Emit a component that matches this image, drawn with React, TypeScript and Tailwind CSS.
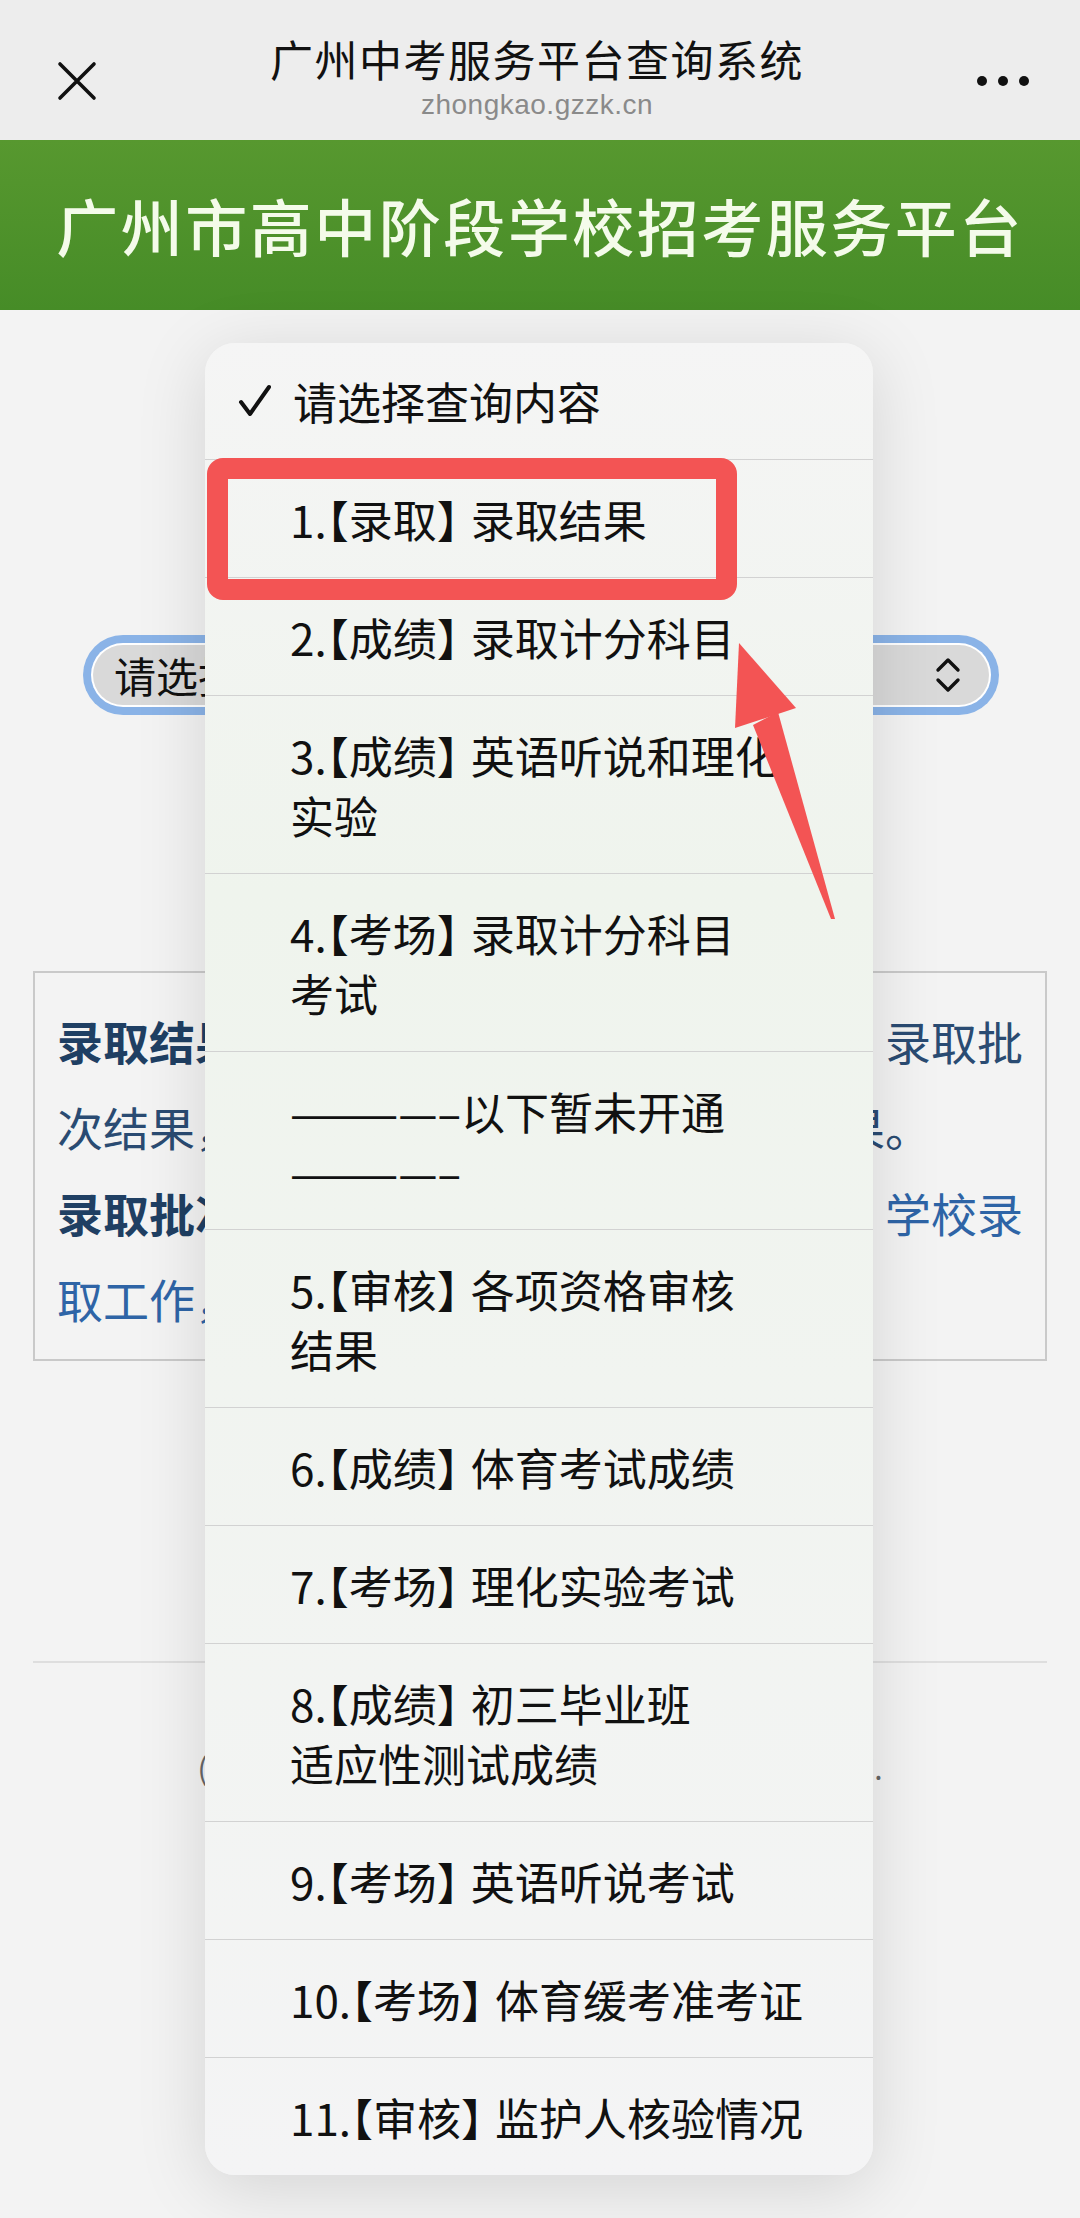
import React from "react";

const CJK = "font-['Noto_Sans_CJK_SC','Noto_Sans',sans-serif]";

type Item = { n?: string; tag?: string; lines: string[]; sep?: boolean };

const ITEMS: Item[] = [
  { n: "1", tag: "录取", lines: ["录取结果"] },
  { n: "2", tag: "成绩", lines: ["录取计分科目"] },
  { n: "3", tag: "成绩", lines: ["英语听说和理化", "实验"] },
  { n: "4", tag: "考场", lines: ["录取计分科目", "考试"] },
  { sep: true, lines: ["————–以下暂未开通", "————–"] },
  { n: "5", tag: "审核", lines: ["各项资格审核", "结果"] },
  { n: "6", tag: "成绩", lines: ["体育考试成绩"] },
  { n: "7", tag: "考场", lines: ["理化实验考试"] },
  { n: "8", tag: "成绩", lines: ["初三毕业班", "适应性测试成绩"] },
  { n: "9", tag: "考场", lines: ["英语听说考试"] },
  { n: "10", tag: "考场", lines: ["体育缓考准考证"] },
  { n: "11", tag: "审核", lines: ["监护人核验情况"] },
];

function OptionRow({ item }: { item: Item }) {
  if (item.sep) {
    return (
      <div className="border-t border-[#d2d2d2] pl-[85px] pr-[40px] py-[28.5px] text-[44px] leading-[60px] text-[#111]">
        <div className="whitespace-nowrap">{item.lines[0]}</div>
        <div className="whitespace-nowrap">{item.lines[1]}</div>
      </div>
    );
  }
  return (
    <div className="border-t border-[#d2d2d2] pl-[85px] pr-[40px] py-[28.5px] text-[44px] leading-[60px] text-[#111] [font-feature-settings:'halt']">
      <div className="whitespace-nowrap">
        {item.n}.【{item.tag}】<span className="ml-[12px]">{item.lines[0]}</span>
      </div>
      {item.lines[1] && <div className="whitespace-nowrap">{item.lines[1]}</div>}
    </div>
  );
}

export default function App() {
  return (
    <div className={`relative w-[1080px] h-[2218px] overflow-hidden bg-[#f3f3f3] ${CJK}`}>
      {/* WeChat top bar */}
      <div className="h-[140px] bg-[#ededed] flex items-center px-[57px] relative">
        <svg width="40" height="40" viewBox="0 0 40 40" className="shrink-0 mt-[22px]">
          <path d="M3 3 L37 37 M37 3 L3 37" stroke="#111" strokeWidth="3.6" strokeLinecap="round" />
        </svg>
        <div className="flex-1 flex flex-col items-center mt-[12px]">
          <div className="text-[43px] leading-[56px] text-[#111] tracking-[1.5px]">广州中考服务平台查询系统</div>
          <div className="text-[28px] leading-[34px] mt-[2px] text-[#8a8a8a] font-['Liberation_Sans',sans-serif] tracking-[0.5px]">
            zhongkao.gzzk.cn
          </div>
        </div>
        <div className="flex gap-[11px] shrink-0 mt-[22px] mr-[-6px]">
          <span className="w-[10px] h-[10px] rounded-full bg-[#111]" />
          <span className="w-[10px] h-[10px] rounded-full bg-[#111]" />
          <span className="w-[10px] h-[10px] rounded-full bg-[#111]" />
        </div>
      </div>

      {/* Green banner */}
      <div className="h-[170px] bg-gradient-to-b from-[#57982f] to-[#468c27] flex items-center justify-center">
        <h1 className="text-[62px] font-medium text-[#f4fbea] tracking-[2.5px] leading-none">
          广州市高中阶段学校招考服务平台
        </h1>
      </div>

      {/* Page content */}
      <div className="pt-[325px]">
        <div className="ml-[83px] w-[916px] h-[80px] rounded-full bg-[#8ab3e7] p-[8px]">
          <div className="h-full rounded-full bg-white p-[2px]">
            <div className="h-full rounded-full bg-[#d9d9d9] flex items-center justify-between pl-[21px] pr-[28px]">
              <span className="text-[42px] text-[#111] leading-none">请选择查询内容</span>
              <svg width="26" height="36" viewBox="0 0 26 36">
                <path d="M3 13 L13 3 L23 13 M3 23 L13 33 L23 23" fill="none" stroke="#111" strokeWidth="3.4" strokeLinecap="round" strokeLinejoin="round" />
              </svg>
            </div>
          </div>
        </div>

        <div className="mt-[256px] ml-[33px] w-[1014px] border-2 border-[#c9c9c9] pt-[24px] pb-[18px] pl-[22px]">
          <div className="w-[970px] text-[46px] leading-[86px]">
            <p className="text-[#2a4b72]">
              <b className="text-[#1f3f63]">录取结果查询：</b>考生可查询本人在以下、录取批次结果，包括录取学校、专业等相关结果。
            </p>
            <p className="text-[#2e64a6]">
              <b className="text-[#1f3f63]">录取批次说明：</b>本市按批次顺序依次开、学校录取工作，具体安排以公布为准。
            </p>
          </div>
        </div>

        <div className="mt-[300px] mx-[33px] h-[2px] bg-[#dedede]" />
        <p className="mt-[82px] text-center text-[30px] text-[#666]">
          (主办单位：广州市招生考试委员会办公室 版权所有.
        </p>
      </div>

      {/* Native select dropdown */}
      <div className="absolute left-[205px] top-[343px] w-[668px] rounded-[30px] overflow-hidden bg-gradient-to-b from-[#f5f5f5] via-[#eff4ed] via-30% to-[#f4f4f5] shadow-[0_12px_70px_rgba(0,0,0,0.13)]">
        <div className="h-[116px] flex items-center pl-[33px] text-[44px] text-[#111]">
          <svg width="34" height="34" viewBox="0 0 34 34" className="shrink-0">
            <path d="M3 18 L12 30 L31 3" fill="none" stroke="#111" strokeWidth="4" strokeLinecap="round" strokeLinejoin="round" />
          </svg>
          <span className="ml-[21px] leading-none">请选择查询内容</span>
        </div>
        {ITEMS.map((it, i) => (
          <OptionRow key={i} item={it} />
        ))}
      </div>

      {/* Red highlight */}
      <div className="absolute left-[207px] top-[458px] w-[530px] h-[142px] border-[21px] border-[#f35454] rounded-[16px]" />

      {/* Red arrow */}
      <svg className="absolute left-[720px] top-[630px]" width="130" height="300" viewBox="0 0 130 300">
        <polygon points="19,13 15,98 76,78" fill="#f35454" />
        <polygon points="33,95 58,82 115,289 111,289" fill="#f35454" />
      </svg>
    </div>
  );
}
